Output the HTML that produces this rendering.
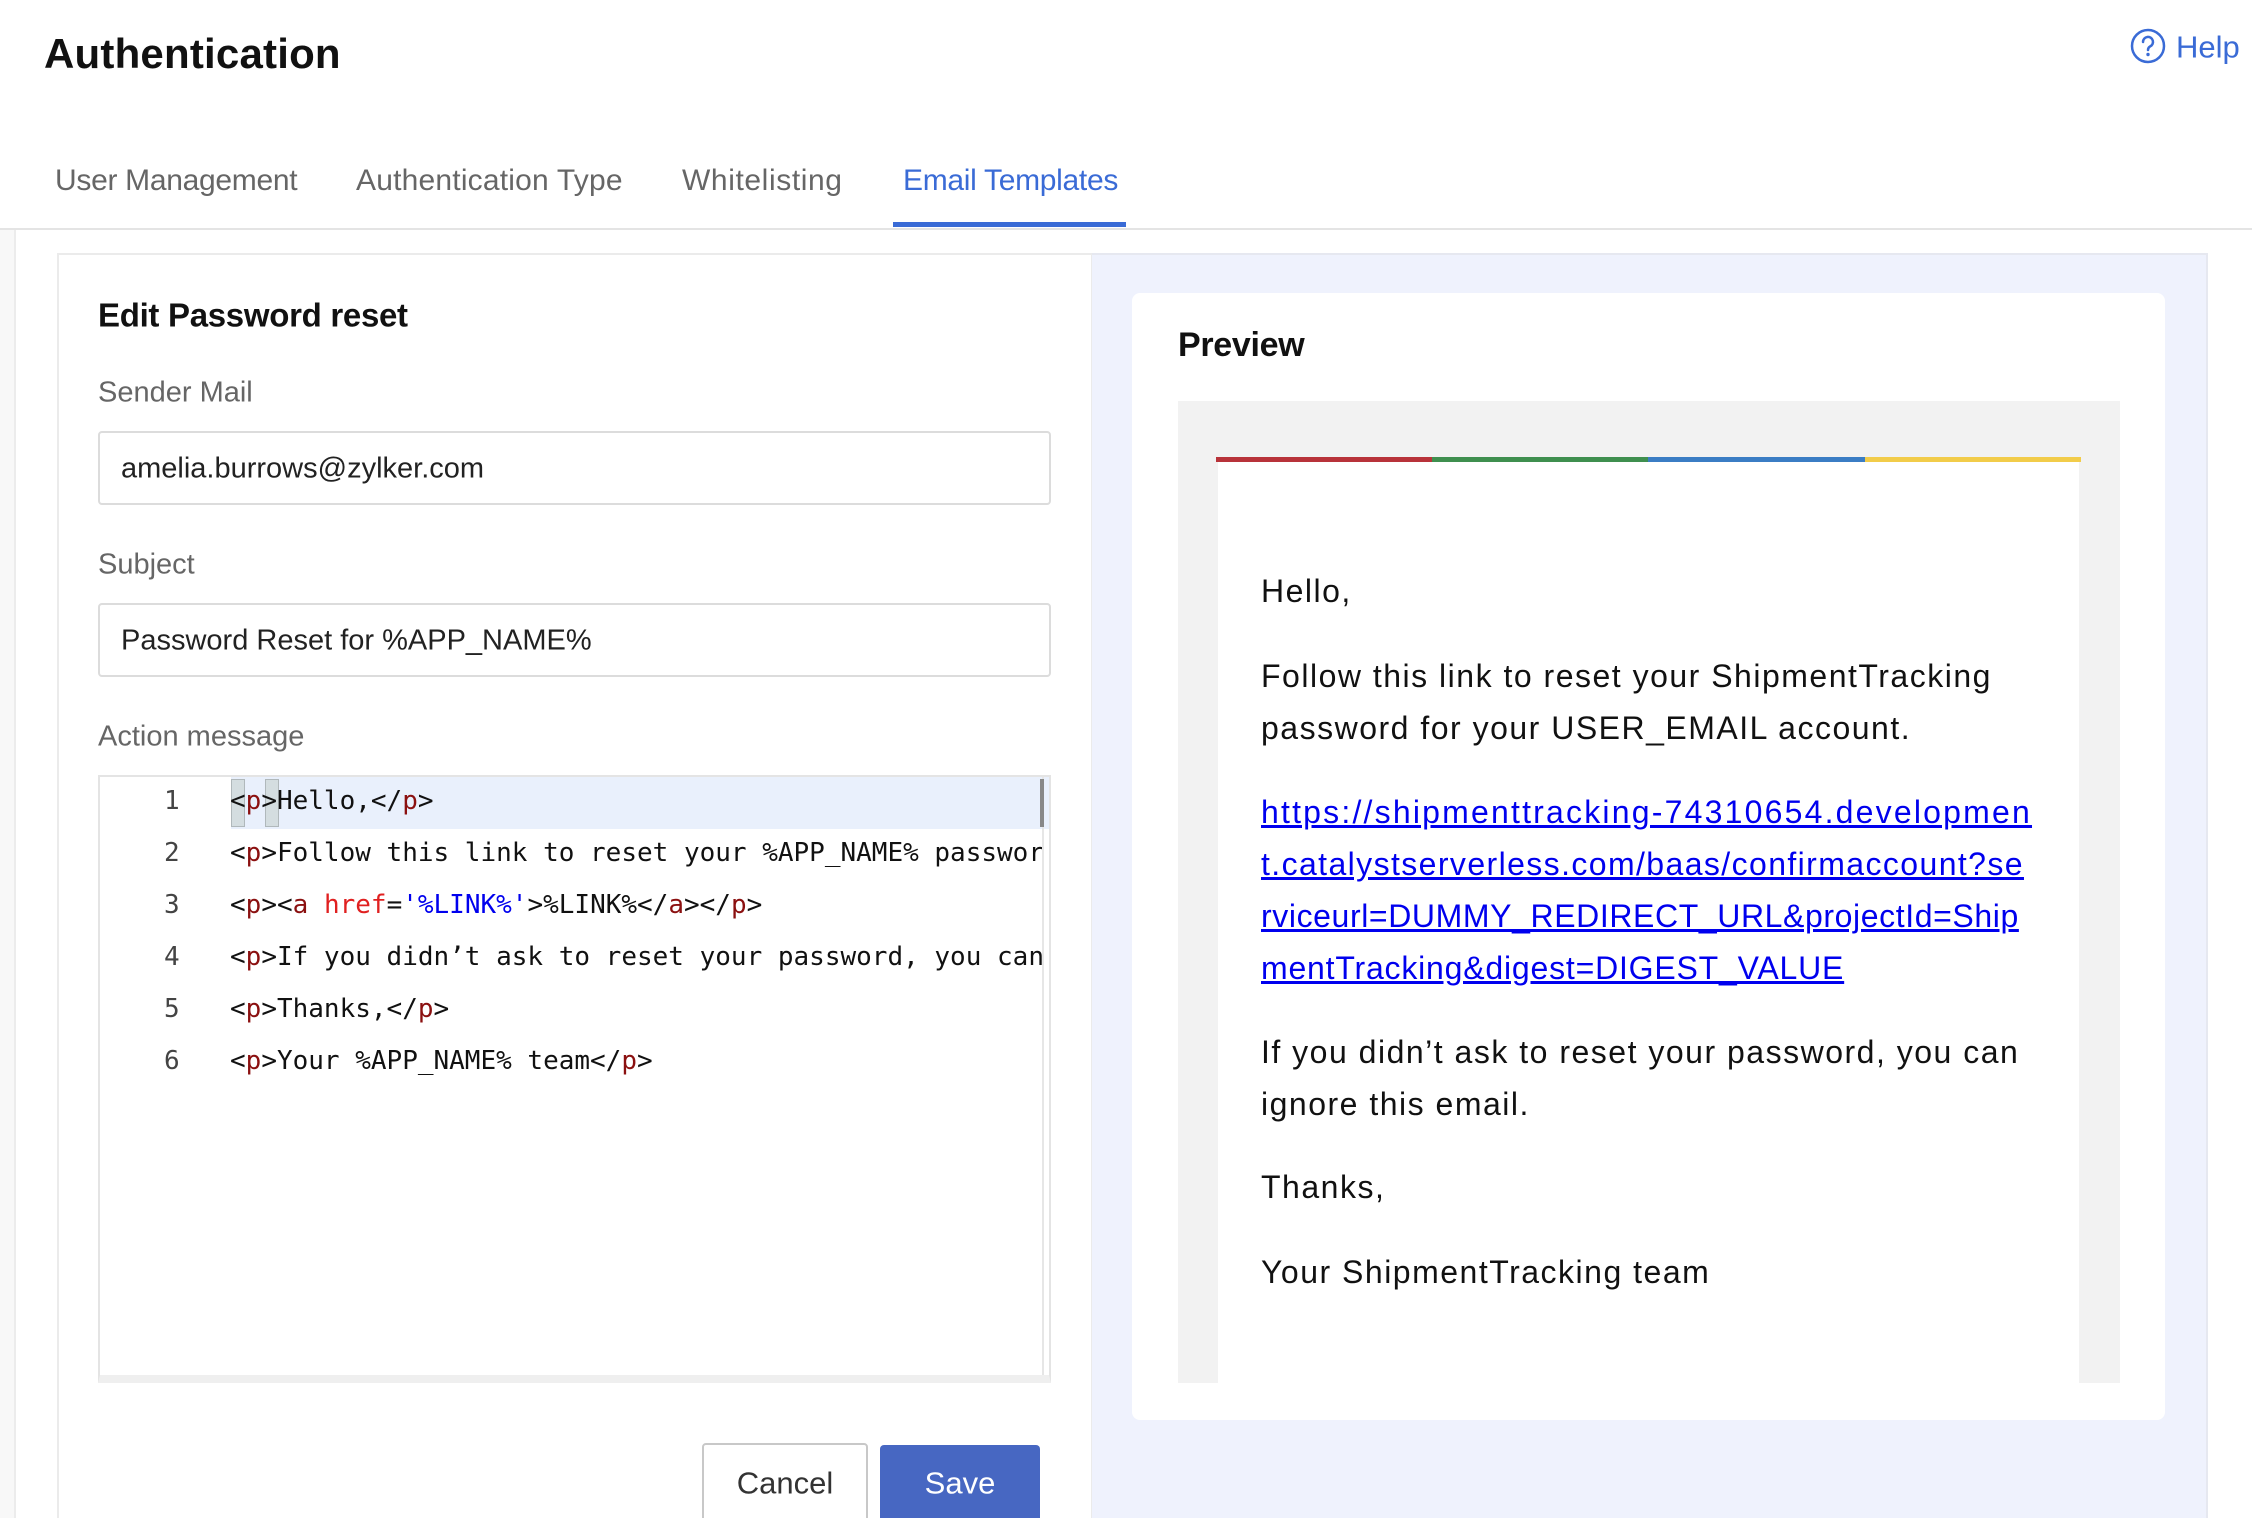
<!DOCTYPE html>
<html style="overflow:hidden;width:2252px;height:1518px"><head><meta charset="utf-8"><style>
*{margin:0;padding:0;box-sizing:border-box}
body{width:2252px;height:1518px;overflow:hidden;background:#fff;font-family:"Liberation Sans",sans-serif;position:relative;color:#111}
.a{position:absolute;white-space:nowrap}
.t{line-height:1;transform:translateY(-50%)}
.mono{font-family:"DejaVu Sans Mono","Liberation Mono",monospace;font-size:26px;color:#111}
.tg{color:#8b1010}.at{color:#e02020}.st{color:#0000ee}
.em{font-size:32px;color:#111;left:1261px;letter-spacing:1.5px}
.lk{color:#0000ee;text-decoration:underline;font-size:32px;left:1261px;letter-spacing:2.2px}
</style></head><body>
<div class="a t" style="left:44px;top:54px;font-size:42px;font-weight:bold;color:#111;letter-spacing:0.2px">Authentication</div>
<svg class="a" style="left:2130px;top:28px" width="36" height="36" viewBox="0 0 36 36"><circle cx="18" cy="18" r="16" fill="none" stroke="#3a6bd6" stroke-width="2.5"/><path d="M13 14a5 5 0 1 1 7 4.5c-1.5.8-2 1.6-2 3.5" fill="none" stroke="#3a6bd6" stroke-width="2.5" stroke-linecap="round"/><circle cx="18" cy="26.5" r="1.7" fill="#3a6bd6"/></svg>
<div class="a t" style="left:2176px;top:47px;font-size:31px;color:#3a6bd6">Help</div>

<div class="a t" style="left:55px;top:181px;font-size:30px;color:#666;letter-spacing:-0.3px">User Management</div>
<div class="a t" style="left:356px;top:181px;font-size:30px;color:#666;letter-spacing:0.2px">Authentication Type</div>
<div class="a t" style="left:682px;top:181px;font-size:30px;color:#666;letter-spacing:0.6px">Whitelisting</div>
<div class="a t" style="left:903px;top:181px;font-size:30px;color:#3a6bd6;letter-spacing:-0.3px">Email Templates</div>
<div class="a" style="left:0;top:228px;width:2252px;height:2px;background:#e4e4e4"></div>
<div class="a" style="left:893px;top:222px;width:233px;height:5px;background:#3a6bd6"></div>

<div class="a" style="left:0;top:230px;width:16px;height:1288px;background:#f8f8f8;border-right:2px solid #ececec"></div>
<div class="a" style="left:57px;top:253px;width:1036px;height:1265px;border:2px solid #ebebeb;border-bottom:0;background:#fff"></div>
<div class="a" style="left:1092px;top:253px;width:1116px;height:1265px;background:#eff2fd;border-top:2px solid #e6e8f0;border-right:2px solid #e6e8f0"></div>

<div class="a t" style="left:98px;top:315px;font-size:33px;font-weight:bold;letter-spacing:-0.3px">Edit Password reset</div>
<div class="a t" style="left:98px;top:393px;font-size:29px;color:#666">Sender Mail</div>
<div class="a" style="left:98px;top:431px;width:953px;height:74px;border:2px solid #dcdcdc;border-radius:4px"></div>
<div class="a t" style="left:121px;top:469px;font-size:29px;color:#222">amelia.burrows@zylker.com</div>
<div class="a t" style="left:98px;top:565px;font-size:29px;color:#666">Subject</div>
<div class="a" style="left:98px;top:603px;width:953px;height:74px;border:2px solid #dcdcdc;border-radius:4px"></div>
<div class="a t" style="left:121px;top:641px;font-size:29px;color:#222">Password Reset for %APP_NAME%</div>
<div class="a t" style="left:98px;top:737px;font-size:29px;color:#666">Action message</div>

<div class="a" style="left:98px;top:775px;width:953px;height:608px;border:2px solid #e4e4e4;border-bottom-width:8px;border-bottom-color:#efefef;background:#fff;overflow:hidden">
 <div class="a" style="left:131px;top:0;width:911px;height:52px;background:#e9f0fc"></div>
 <div class="a" style="left:942px;top:0;width:2px;height:600px;background:#e6e6e6"></div>
 <div class="a" style="left:940px;top:2px;width:4px;height:48px;background:#888"></div>
 <div class="a" style="left:131px;top:2px;width:14px;height:48px;background:#d4dde0;border:1px solid #b0b8bb"></div>
 <div class="a" style="left:165px;top:2px;width:14px;height:48px;background:#d4dde0;border:1px solid #b0b8bb"></div>
</div>
<div class="a mono t" style="left:164px;top:801px;color:#444">1</div>
<div class="a mono t" style="left:164px;top:853px;color:#444">2</div>
<div class="a mono t" style="left:164px;top:905px;color:#444">3</div>
<div class="a mono t" style="left:164px;top:957px;color:#444">4</div>
<div class="a mono t" style="left:164px;top:1009px;color:#444">5</div>
<div class="a mono t" style="left:164px;top:1061px;color:#444">6</div>
<div class="a" style="left:230px;top:775px;width:812px;height:600px;overflow:hidden">
<div class="a mono t" style="left:0;top:26px">&lt;<span class="tg">p</span>&gt;Hello,&lt;/<span class="tg">p</span>&gt;</div>
<div class="a mono t" style="left:0;top:78px">&lt;<span class="tg">p</span>&gt;Follow this link to reset your %APP_NAME% password for your %EMAIL% account.&lt;/<span class="tg">p</span>&gt;</div>
<div class="a mono t" style="left:0;top:130px">&lt;<span class="tg">p</span>&gt;&lt;<span class="tg">a</span> <span class="at">href</span>=<span class="st">'%LINK%'</span>&gt;%LINK%&lt;/<span class="tg">a</span>&gt;&lt;/<span class="tg">p</span>&gt;</div>
<div class="a mono t" style="left:0;top:182px">&lt;<span class="tg">p</span>&gt;If you didn’t ask to reset your password, you can ignore this email.&lt;/<span class="tg">p</span>&gt;</div>
<div class="a mono t" style="left:0;top:234px">&lt;<span class="tg">p</span>&gt;Thanks,&lt;/<span class="tg">p</span>&gt;</div>
<div class="a mono t" style="left:0;top:286px">&lt;<span class="tg">p</span>&gt;Your %APP_NAME% team&lt;/<span class="tg">p</span>&gt;</div>
</div>

<div class="a" style="left:702px;top:1443px;width:166px;height:90px;border:2px solid #c8c8c8;border-radius:4px;background:#fff"></div>
<div class="a t" style="left:702px;width:166px;text-align:center;top:1483px;font-size:31px;color:#333">Cancel</div>
<div class="a" style="left:880px;top:1445px;width:160px;height:90px;background:#4767c2;border-radius:4px"></div>
<div class="a t" style="left:880px;width:160px;text-align:center;top:1483px;font-size:31px;color:#fff">Save</div>

<div class="a" style="left:1132px;top:293px;width:1033px;height:1127px;background:#fff;border-radius:8px"></div>
<div class="a t" style="left:1178px;top:345px;font-size:34px;font-weight:bold;letter-spacing:-0.3px">Preview</div>
<div class="a" style="left:1178px;top:401px;width:942px;height:982px;background:#f2f2f2"></div>
<div class="a" style="left:1218px;top:460px;width:861px;height:923px;background:#fff"></div>
<div class="a" style="left:1216px;top:457px;width:216px;height:5px;background:#b8333a"></div>
<div class="a" style="left:1432px;top:457px;width:216px;height:5px;background:#3f8f4f"></div>
<div class="a" style="left:1648px;top:457px;width:217px;height:5px;background:#3b7dc4"></div>
<div class="a" style="left:1865px;top:457px;width:216px;height:5px;background:#f2cc4a"></div>

<div class="a t em" style="top:591px">Hello,</div>
<div class="a t em" style="top:676px">Follow this link to reset your ShipmentTracking</div>
<div class="a t em" style="top:728px">password for your USER_EMAIL account.</div>
<div class="a t lk" style="top:812px">https://shipmenttracking-74310654.developmen</div>
<div class="a t lk" style="top:864px;letter-spacing:1.4px">t.catalystserverless.com/baas/confirmaccount?se</div>
<div class="a t lk" style="top:916px;letter-spacing:0.6px">rviceurl=DUMMY_REDIRECT_URL&amp;projectId=Ship</div>
<div class="a t lk" style="top:968px;letter-spacing:0.8px">mentTracking&amp;digest=DIGEST_VALUE</div>
<div class="a t em" style="top:1052px">If you didn’t ask to reset your password, you can</div>
<div class="a t em" style="top:1104px">ignore this email.</div>
<div class="a t em" style="top:1187px">Thanks,</div>
<div class="a t em" style="top:1272px">Your ShipmentTracking team</div>
</body></html>
